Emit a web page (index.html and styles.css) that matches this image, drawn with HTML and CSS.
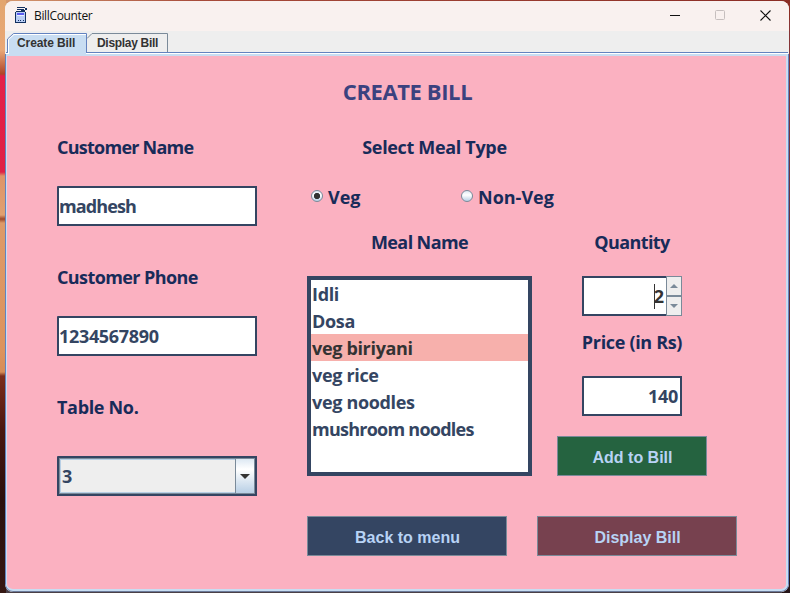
FILE: index.html
```
<!DOCTYPE html>
<html lang="en">
<head>
<meta charset="utf-8">
<title>BillCounter</title>
<link rel="stylesheet" href="styles.css">
</head>
<body>
<div class="window">
  <header class="titlebar">
    <svg class="app-icon" width="14" height="17" viewBox="0 0 14 17" shape-rendering="crispEdges">
      <path d="M1 5h10v10H1z" fill="#b9cdf5"/>
      <path d="M2 6h7v2H2z" fill="#5b5bf0"/>
      <path d="M2 8h7v1H2z" fill="#e8f0ff"/>
      <path d="M0 5h1v11H0zM1 15h10v1H1zM10 5h1v11h-1zM1 4h9v1H1zM3 13h1v1H3zM5 13h1v1H5zM8 13h1v1H8zM2 0h8v1H2zM2 2h7v1H2zM9 0h1v1H9zM10 1h2v2h-2zM6 3h4v1H6z" fill="#12305f"/>
    </svg>
    <span class="app-name">BillCounter</span>
    <div class="controls">
      <svg width="11" height="11" viewBox="0 0 11 11"><path d="M0 5.500h10" stroke="#111"/></svg>
      <svg width="11" height="11" viewBox="0 0 11 11"><rect x=".5" y=".5" width="9" height="9" rx="1" fill="none" stroke="#c6bfbe"/></svg>
      <svg width="11" height="11" viewBox="0 0 11 11"><path d="M.5.5l10 10M10.5.5l-10 10" stroke="#111" stroke-width="1.1"/></svg>
    </div>
  </header>
  <nav class="tabs">
    <svg class="tab-lines" width="162" height="22" viewBox="0 0 162 22">
      <path d="M1 22V7L7 2h72v20z" fill="#c8ddf2"/>
      <path d="M.5 21V7L6.500 1.500h73V21" fill="none" stroke="#6382bf"/>
      <path d="M1.500 22V7.500L7 2.500h72" fill="none" stroke="#fff"/>
      <path d="M80 6.500L85 1.500h75.500V20" fill="none" stroke="#7a8a99"/>
    </svg>
    <span class="tab tab-first">Create Bill</span>
    <span class="tab tab-second">Display Bill</span>
  </nav>
  <main class="panel">
    <h1>CREATE BILL</h1>
    <div class="form">
      <section class="customer">
        <div class="group"><label class="tight">Customer Name</label><div class="field tight-max">madhesh</div></div>
        <div class="group"><label class="semi-tight">Customer Phone</label><div class="field snug">1234567890</div></div>
        <div class="group table-group"><label class="snug">Table No.</label>
          <div class="combo"><span class="combo-value">3</span><span class="combo-button"><svg width="10" height="5" viewBox="0 0 10 5"><path d="M0 0h10L5 5z" fill="#333"/></svg></span></div>
        </div>
      </section>
      <section class="meal">
        <label class="meal-type snug">Select Meal Type</label>
        <div class="radios">
          <span class="option"><i class="radio checked"></i>Veg</span>
          <span class="option"><i class="radio"></i>Non-Veg</span>
        </div>
        <div class="order">
          <div class="meals">
            <label class="semi-tight">Meal Name</label>
            <ul class="list snug">
              <li>Idli</li><li>Dosa</li><li class="selected">veg biriyani</li><li>veg rice</li><li>veg noodles</li><li class="tight">mushroom noodles</li>
            </ul>
          </div>
          <div class="amount">
            <label class="semi-tight">Quantity</label>
            <div class="spinner">
              <div class="spin-value"><span class="caret"></span><span>2</span></div>
              <div class="spin-buttons">
                <span><svg width="8" height="4" viewBox="0 0 8 4"><path d="M0 4h8L4 0z" fill="#7a8a99"/></svg></span>
                <span><svg width="8" height="4" viewBox="0 0 8 4"><path d="M0 0h8L4 4z" fill="#7a8a99"/></svg></span>
              </div>
            </div>
            <label class="price-label snug">Price (in Rs)</label>
            <div class="field price snug">140</div>
            <button class="add">Add to Bill</button>
          </div>
        </div>
        <div class="actions"><button class="back">Back to menu</button><button class="display">Display Bill</button></div>
      </section>
    </div>
  </main>
</div>
</body>
</html>
```

FILE: styles.css
```
* { box-sizing: border-box; }
body {
  margin: 0;
  width: 790px;
  height: 593px;
  padding: 1px 1px 1px 5px;
  overflow: hidden;
  background:
    linear-gradient(180deg, #e2a56f 0, #e9a877 50px, #b04428 74px, #e32049 76px, #df2145 172px, #de9468 176px, #e0a070 215px, #9d482a 219px, #dd9a68 223px, #dc935d 350px, #d68d57 372px, #7b2e1c 376px, #4a1710 430px, #2a100d 500px, #351713 593px) 0 0 / 6px 593px no-repeat,
    linear-gradient(90deg, #d59a70 0, #a74b3a 200px, #8b2d25 790px) 0 0 / 790px 20px no-repeat,
    linear-gradient(180deg, #8d3433, #683542 200px, #251519) right top / 8px 593px no-repeat,
    #4a4048;
  font-family: "Open Sans", "Noto Sans", sans-serif;
}
.window {
  width: 784px;
  height: 591px;
  border-radius: 8px;
  overflow: hidden;
  background: #eee;
  display: flex;
  flex-direction: column;
}
.titlebar {
  height: 30px;
  flex: none;
  background: #f9f1ef;
  display: flex;
  align-items: center;
  padding: 0 18px 0 10px;
}
.app-icon { margin: -2px 5px 0 0; }
.app-name { font-size: 12px; color: #111; letter-spacing: -0.35px; margin-top: -1px; }
.controls { margin: -1px 0 0 auto; display: flex; gap: 34px; }
.tabs {
  height: 21px;
  flex: none;
  position: relative;
  z-index: 1;
  display: flex;
  font: bold 12px/22px "Liberation Sans", sans-serif;
  color: #333;
  padding: 1px 0 0 12px;
}
.tab-lines { position: absolute; left: 2px; top: 1px; }
.tab { position: relative; letter-spacing: -0.1px; }
.tab-first { width: 80px; }
.tab-second { letter-spacing: -0.3px; }
.panel {
  flex: 1;
  min-height: 0;
  background: #fbb1c1;
  border: solid #c8ddf2;
  border-width: 2px 2px 2px 1px;
  box-shadow: 0 -1px #fff, 0 -2px #6382bf, -1px 0 #6382bf, 1px 0 #6382bf, 0 1px #6b7a99;
  margin: 2px 1px 1px 1px;
  border-radius: 0 0 7px 7px;
  padding: 21px 49px 0 50px;
}
h1 {
  margin: 0;
  height: 30px;
  width: 701px;
  text-align: center;
  font-size: 22px;
  line-height: 28px;
  letter-spacing: -0.4px;
  color: #3b427f;
}
.form { display: flex; gap: 50px; margin-top: 25px; }
label {
  display: block;
  height: 30px;
  font-size: 18px;
  font-weight: 700;
  line-height: 31px;
  color: #182b59;
  text-align: center;
  white-space: nowrap;
}
.snug { letter-spacing: -0.33px; }
.semi-tight { letter-spacing: -0.6px; }
.tight { letter-spacing: -0.75px; }
.tight-max { letter-spacing: -0.9px; }
.customer { width: 200px; display: flex; flex-direction: column; gap: 36px; }
.customer label { text-align: left; margin-bottom: 24px; }
.customer .table-group label { margin-bottom: 34px; }
.field, .combo {
  height: 40px;
  border: 2px solid #344562;
  border-radius: 1px 0 0 0;
  background: #fff;
  font-size: 18px;
  font-weight: 700;
  line-height: 37px;
  color: #344562;
}
.combo { display: flex; background: #eee; box-shadow: inset 0 0 0 1px #7a8a99, inset 0 0 0 2px #b8cfe5; padding: 1px; line-height: 35px; }
.combo-value { flex: 1; padding-left: 2px; }
.combo-button {
  width: 19px;
  border-left: 1px solid #7a8a99;
  background: linear-gradient(#dde8f3, #fff 30%, #b8cfe5);
  display: flex;
  align-items: center;
  justify-content: center;
}
.meal { width: 430px; }
.meal-type { width: 255px; }
.radios { display: flex; height: 30px; margin-top: 20px; padding-left: 4px; }
.option {
  width: 150px;
  display: flex;
  align-items: center;
  gap: 5px;
  font-size: 18px;
  font-weight: 700;
  line-height: 31px;
  color: #182b59;
}
.radio {
  width: 12px;
  height: 12px;
  margin-top: -2px;
  border: 1px solid #7a8a99;
  border-radius: 50%;
  background: linear-gradient(#dde8f3, #fff 40%, #b8cfe5);
}
.radio.checked { background: radial-gradient(circle, #333 0 2.800px, transparent 3.400px), linear-gradient(#dde8f3, #fff 40%, #b8cfe5); }
.order { display: flex; gap: 25px; margin-top: 15px; }
.meals { width: 225px; }
.list {
  list-style: none;
  margin: 19px 0 0;
  padding: 0;
  height: 200px;
  border: 4px solid #344562;
  background: #fff;
  color: #344562;
  font-size: 18px;
  font-weight: 700;
}
.list li { height: 27px; line-height: 29px; padding-left: 1px; }
.list .selected { background: #f7b0ac; color: #333; }
.amount { width: 150px; display: flex; flex-direction: column; align-items: center; }
.spinner { width: 100px; height: 40px; margin-top: 19px; display: flex; }
.spin-value {
  flex: 1;
  background: #fff;
  border: 2px solid #344562;
  border-right: 0;
  display: flex;
  justify-content: flex-end;
  align-items: center;
  padding-right: 2px;
  font-size: 18px;
  font-weight: 700;
  line-height: 37px;
  color: #333;
}
.caret { width: 1px; height: 25px; margin-right: -1px; background: #333; }
.spin-buttons { width: 16px; display: grid; grid-template-rows: 20px 20px; }
.spin-buttons span { border: 1px solid #7a8a99; background: #eee; display: flex; align-items: center; justify-content: center; }
.price-label { margin-top: 11px; }
.price { width: 100px; margin-top: 19px; text-align: right; padding-right: 2px; }
button {
  height: 40px;
  padding: 3px 0 0 1px;
  border: 1px solid #7a8a99;
  font: bold 16px "Liberation Sans", sans-serif;
  color: #b8d3f5;
}
.add { width: 150px; margin-top: 20px; background: #256340; }
.actions { display: flex; gap: 30px; margin-top: 40px; }
.actions button { width: 200px; }
.back { background: #344562; }
.display { background: #77414f; }
```
